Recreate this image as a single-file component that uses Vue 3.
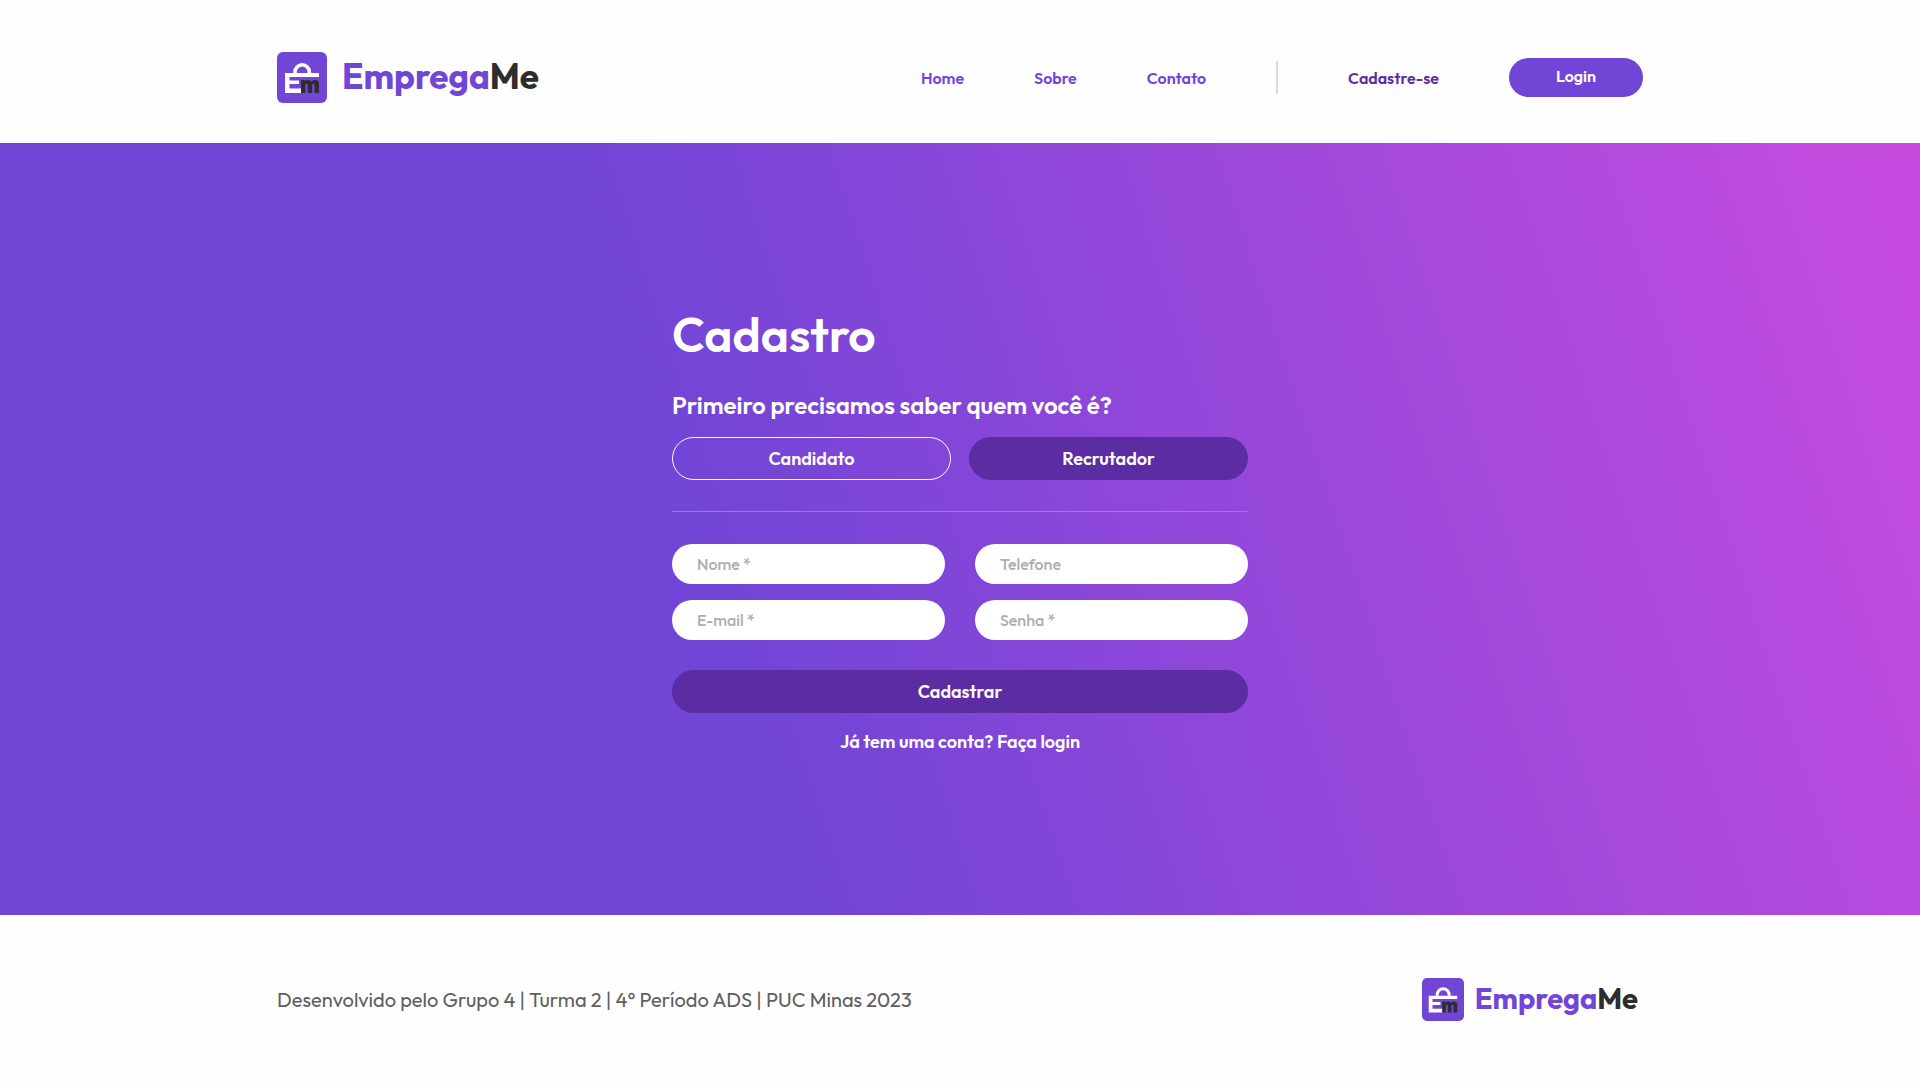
<script setup>
import { ref } from 'vue'

const links = ['Home', 'Sobre', 'Contato']
const roles = ['Candidato', 'Recrutador']
const role = ref('Recrutador')
const fields = [
  { id: 'nome', type: 'text', label: 'Nome *' },
  { id: 'telefone', type: 'tel', label: 'Telefone' },
  { id: 'email', type: 'email', label: 'E-mail *' },
  { id: 'senha', type: 'password', label: 'Senha *' }
]
</script>

<template>
  <div class="page">
    <header class="header">
      <div class="container">
        <a class="logo" href="#">
          <svg class="mark" viewBox="0 0 50 51" aria-hidden="true">
            <rect width="50" height="51" rx="6" fill="#7145d6" />
            <path d="M18 21v-1a7.200 7.200 0 0 1 14.400 0v1" fill="none" stroke="#fff" stroke-width="3.600" />
            <path d="M8 21h34v4H12.500v3.500H22V32h-9.500v4.500H25V41H8z" fill="#fff" />
            <path d="M24 28h4v1.300c1.800-2 5-1.900 6.300.4 1.900-2.600 7.700-2.700 7.700 2.300v9h-4.400v-7.500c0-2.400-2.500-2.200-2.500 0V41h-4.300v-7.500c0-2.400-2.500-2.200-2.500 0V41H24z" fill="#2d2d2d" />
          </svg>
          <span class="name">Emprega<b>Me</b></span>
        </a>
        <nav class="nav">
          <a v-for="link in links" :key="link" href="#">{{ link }}</a>
          <span class="bar"></span>
          <a class="signup" href="#">Cadastre-se</a>
          <button class="login" type="button">Login</button>
        </nav>
      </div>
    </header>

    <main class="main">
      <form class="form" @submit.prevent>
        <h1>Cadastro</h1>
        <h2>Primeiro precisamos saber quem você é?</h2>
        <div class="roles">
          <button
            v-for="item in roles"
            :key="item"
            type="button"
            class="pill"
            :class="{ filled: role === item }"
            @click="role = item"
          >{{ item }}</button>
        </div>
        <hr />
        <div class="fields">
          <input
            v-for="field in fields"
            :id="field.id"
            :key="field.id"
            :type="field.type"
            :placeholder="field.label"
            :aria-label="field.label"
          />
        </div>
        <button class="pill filled" type="submit">Cadastrar</button>
        <a class="have" href="#">Já tem uma conta? Faça login</a>
      </form>
    </main>

    <footer class="footer">
      <div class="container">
        <p>Desenvolvido pelo Grupo 4 | Turma 2 | 4° Período ADS | PUC Minas 2023</p>
        <a class="logo small" href="#">
          <svg class="mark" viewBox="0 0 50 51" aria-hidden="true">
            <rect width="50" height="51" rx="6" fill="#7145d6" />
            <path d="M18 21v-1a7.200 7.200 0 0 1 14.400 0v1" fill="none" stroke="#fff" stroke-width="3.600" />
            <path d="M8 21h34v4H12.500v3.500H22V32h-9.500v4.500H25V41H8z" fill="#fff" />
            <path d="M24 28h4v1.300c1.800-2 5-1.900 6.300.4 1.900-2.600 7.700-2.700 7.700 2.300v9h-4.400v-7.500c0-2.400-2.500-2.200-2.500 0V41h-4.300v-7.500c0-2.400-2.500-2.200-2.500 0V41H24z" fill="#2d2d2d" />
          </svg>
          <span class="name">Emprega<b>Me</b></span>
        </a>
      </div>
    </footer>
  </div>
</template>

<style>
body {
  margin: 0;
  background: #fefefe;
}
</style>

<style scoped>
.page {
  display: flex;
  flex-direction: column;
  min-height: 100vh;
  font-family: Outfit, Lato, sans-serif;
  font-weight: 600;
}
.page * {
  box-sizing: border-box;
}
a {
  color: inherit;
  text-decoration: none;
}
button,
input {
  font: inherit;
}
.header,
.footer {
  background: #fefefe;
}
.header {
  padding: 52px 0 40px;
}
.footer {
  padding: 63px 0 62px;
}
.container {
  display: flex;
  align-items: center;
  justify-content: space-between;
  max-width: 1366px;
  margin: 0 auto;
}
.logo {
  display: flex;
  align-items: center;
  gap: 15px;
  color: #7145d6;
  font-size: 35px;
  font-weight: 700;
  line-height: 43px;
}
.logo b {
  color: #2d2d2d;
  font-weight: 700;
}
.mark {
  width: 50px;
  height: 51px;
}
.name {
  padding-bottom: 2px;
}
.small {
  gap: 11px;
  padding-right: 5px;
  font-size: 29px;
  line-height: 40px;
}
.small .mark {
  width: 42px;
  height: 43px;
}
.nav {
  display: flex;
  align-items: center;
  gap: 70px;
  color: #7145d6;
  font-size: 16px;
  line-height: 20px;
}
.bar {
  width: 2px;
  height: 33px;
  background: #d9d9d9;
}
.signup {
  color: #5b2ca2;
}
.login {
  width: 134px;
  height: 39px;
  padding: 0 0 3px;
  border: 0;
  border-radius: 20px;
  background: #7145d6;
  color: #fff;
}
.main {
  display: flex;
  flex: 1;
  align-items: center;
  justify-content: center;
  background: linear-gradient(72deg, #7145d6 38%, #c84be0);
  color: #fff;
}
.form {
  display: flex;
  flex-direction: column;
  width: 30%;
  min-width: 340px;
}
h1 {
  margin: 0 0 25px;
  font-size: 48px;
  font-weight: 600;
  line-height: 62px;
}
h2 {
  margin: 0 0 17px;
  font-size: 24px;
  font-weight: 600;
  line-height: 30px;
}
.roles {
  display: grid;
  grid-template-columns: 1fr 1fr;
  gap: 18px;
}
.pill {
  height: 43px;
  padding: 0;
  border: 1px solid #fff;
  border-radius: 22px;
  background: transparent;
  color: #fff;
  font-size: 18px;
}
.filled {
  border-color: #5b2ca2;
  background: #5b2ca2;
}
hr {
  width: 100%;
  height: 1px;
  margin: 31px 0 32px;
  border: 0;
  background: #b567f5;
}
.fields {
  display: grid;
  grid-template-columns: 1fr 1fr;
  gap: 16px 30px;
  margin-bottom: 30px;
}
input {
  width: 100%;
  height: 40px;
  padding: 0 25px;
  border: 0;
  border-radius: 20px;
  background: #fff;
  color: #2d2d2d;
  font-size: 16px;
  font-weight: 500;
}
input::placeholder {
  color: #adadad;
  opacity: 1;
}
.have {
  align-self: center;
  margin-top: 16px;
  font-size: 18px;
  line-height: 26px;
}
p {
  margin: 0;
  color: #5f5f5f;
  font-size: 20px;
  font-weight: 400;
  line-height: 26px;
}
</style>
